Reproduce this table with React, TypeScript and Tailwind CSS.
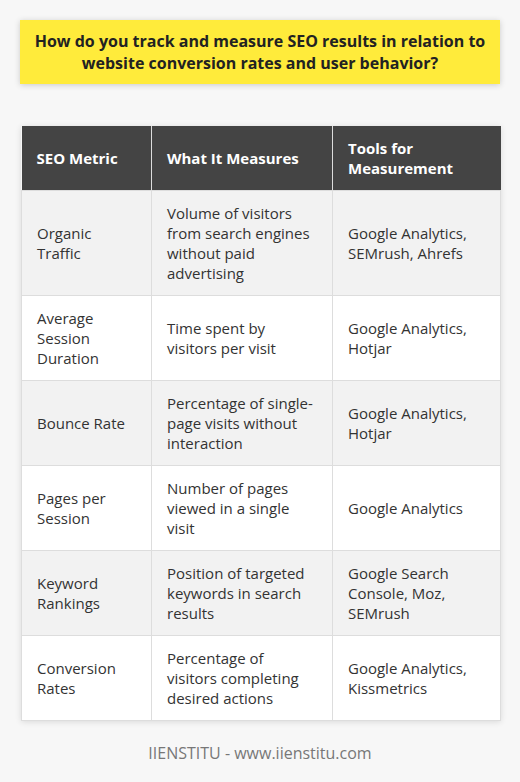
import React from "react";

const rows: [string, string, string][] = [
  ["Organic Traffic", "Volume of visitors from search engines without paid advertising", "Google Analytics, SEMrush, Ahrefs"],
  ["Average Session Duration", "Time spent by visitors per visit", "Google Analytics, Hotjar"],
  ["Bounce Rate", "Percentage of single-page visits without interaction", "Google Analytics, Hotjar"],
  ["Pages per Session", "Number of pages viewed in a single visit", "Google Analytics"],
  ["Keyword Rankings", "Position of targeted keywords in search results", "Google Search Console, Moz, SEMrush"],
  ["Conversion Rates", "Percentage of visitors completing desired actions", "Google Analytics, Kissmetrics"],
];

export default function App() {
  return (
    <div
      className="w-[520px] h-[782px] bg-[#f7f7f7] px-[20px] pt-[20px]"
      style={{ fontFamily: '"Open Sans", "Noto Sans", sans-serif' }}
    >
      <div className="bg-[#ffeb3b] py-[10px] px-[12px] text-center text-[16px] leading-[22px] font-bold text-[#222] shadow-[0_1px_6px_rgba(0,0,0,0.18)]">
        How do you track and measure SEO results in relation to website conversion rates and user behavior?
      </div>
      <table className="mt-[42px] ml-[1px] w-[479px] border-collapse table-fixed text-[15px] leading-[20px] shadow-[0_1px_6px_rgba(0,0,0,0.12)]">
        <colgroup>
          <col className="w-[130px]" />
          <col className="w-[181px]" />
          <col className="w-[168px]" />
        </colgroup>
        <thead>
          <tr className="bg-[#444444] text-white font-bold">
            <th className="text-left align-middle px-[15px] py-[12px] border-r border-[#dddddd] h-[64px]">SEO Metric</th>
            <th className="text-left align-middle px-[15px] py-[12px] border-r border-[#dddddd]">What It Measures</th>
            <th className="text-left align-middle px-[15px] py-[12px]">Tools for Measurement</th>
          </tr>
        </thead>
        <tbody className="text-[#333333]">
          {rows.map((r, i) => (
            <tr key={i} className={i % 2 === 0 ? "bg-[#f2f2f2]" : "bg-white"}>
              {r.map((c, j) => (
                <td
                  key={j}
                  className="align-middle px-[15px] py-[12px] border border-[#dddddd] h-[85px]"
                >
                  {c}
                </td>
              ))}
            </tr>
          ))}
        </tbody>
      </table>
      <div className="mt-[22px] text-center text-[16px] leading-[20px] text-[#777777]">
        IIENSTITU - www.iienstitu.com
      </div>
    </div>
  );
}
